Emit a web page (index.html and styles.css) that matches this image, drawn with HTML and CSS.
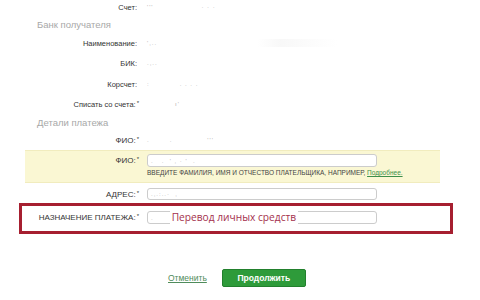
FILE: index.html
```html
<!DOCTYPE html>
<html lang="ru">
<head>
<meta charset="utf-8">
<link rel="stylesheet" href="styles.css">
</head>
<body>
<div class="page">
  <div class="row h14"><span class="lbl plain">Счет:</span><span class="val"><span class="blur">'''</span><span class="blur gap1">· · ·</span></span></div>
  <div class="heading h20">Банк получателя</div>
  <div class="row h18"><span class="lbl plain">Наименование:</span><span class="val"><span class="blur">',..</span><span class="smudge"></span></span></div>
  <div class="row h22"><span class="lbl plain">БИК:</span><span class="val"><span class="blur">.,..</span></span></div>
  <div class="row h20"><span class="lbl plain">Корсчет:</span><span class="val"><span class="blur">:</span><span class="blur gap2">. . . .</span></span></div>
  <div class="row h20"><span class="lbl">Списать со счета:<sup>*</sup></span><span class="val"><span class="blur gap3">ı'</span></span></div>
  <div class="heading h16">Детали платежа</div>
  <div class="row h20"><span class="lbl up">ФИО:<sup>*</sup></span><span class="val"><span class="blur">.</span><span class="blur gap4">.</span><span class="blur gap5">'''</span></span></div>

  <div class="hintbox">
    <div class="row">
      <span class="lbl up lbl-y">ФИО:<sup>*</sup></span>
      <div class="input"><span class="blur">.   .  ' , · '  .</span></div>
    </div>
    <div class="hint">ВВЕДИТЕ ФАМИЛИЯ, ИМЯ И ОТЧЕСТВО ПЛАТЕЛЬЩИКА, НАПРИМЕР, <a class="more" href="#">Подробнее.</a></div>
  </div>

  <div class="row addr">
    <span class="lbl up">АДРЕС:<sup>*</sup></span>
    <div class="input in12"><span class="blur">.,.:..·  ,</span></div>
  </div>

  <div class="redbox">
    <div class="row">
      <span class="lbl up lbl-r">НАЗНАЧЕНИЕ ПЛАТЕЖА:<sup>*</sup></span>
      <div class="input"><span class="blur">.</span><span class="purpose">Перевод личных средств</span></div>
    </div>
  </div>

  <div class="actions">
    <a class="cancel" href="#">Отменить</a>
    <button class="go" type="button">Продолжить</button>
  </div>
</div>
</body>
</html>
```

FILE: styles.css
```css
html, body {
  margin: 0;
  padding: 0;
  background: #ffffff;
}
body {
  width: 480px;
  height: 300px;
  overflow: hidden;
  font-family: "Liberation Sans", Arial, sans-serif;
  color: #333333;
}
.page {
  display: flex;
  flex-direction: column;
}
.row {
  display: flex;
  align-items: center;
}
.h14 { height: 14px; }
.h16 { height: 16px; }
.h18 { height: 18px; }
.h20 { height: 20px; }
.h22 { height: 22px; }

.lbl {
  width: 139px;
  flex: none;
  box-sizing: border-box;
  text-align: right;
  font-size: 7.5px;
  white-space: nowrap;
  color: #333333;
}
.lbl.plain { padding-right: 2px; }
.lbl.up { font-size: 8px; }
.lbl-y { width: 114px; }
.lbl-r { width: 117px; }
sup {
  font-size: 6px;
  vertical-align: 2px;
  line-height: 0;
  margin-left: 1px;
}
.val {
  margin-left: 8px;
  display: flex;
  align-items: center;
}
.heading {
  display: flex;
  align-items: center;
  padding-left: 37px;
  font-size: 9.5px;
  color: #a8a8a8;
}
.blur {
  color: #b0b0b0;
  font-size: 6px;
  letter-spacing: 1px;
  white-space: pre;
}
.gap1 { margin-left: 48px; }
.gap2 { margin-left: 30px; }
.gap3 { margin-left: 28px; }
.gap4 { margin-left: 20px; }
.gap5 { margin-left: 35px; }
.smudge {
  width: 80px;
  height: 8px;
  margin-left: 100px;
  background: linear-gradient(90deg, rgba(245,245,245,0), rgba(246,246,246,0.8) 30%, rgba(250,250,250,0.6) 70%, rgba(255,255,255,0));
}

.hintbox {
  margin-left: 25px;
  width: 415px;
  height: 33px;
  box-sizing: border-box;
  background: #faf7d3;
  border-top: 1px solid #f1ecbe;
  border-bottom: 1px solid #f1ecbe;
  padding-top: 3px;
}
.input {
  margin-left: 8px;
  width: 230px;
  height: 13px;
  box-sizing: border-box;
  border: 1px solid #cccccc;
  border-radius: 3px;
  background: #ffffff;
  display: flex;
  align-items: center;
  padding-left: 3px;
}
.in12 { height: 12px; }
.hint {
  margin-left: 122px;
  margin-top: 1px;
  height: 10px;
  line-height: 10px;
  font-size: 6.5px;
  color: #444444;
  white-space: nowrap;
}
.more {
  color: #3d8f4a;
  text-decoration: underline;
}
.addr {
  margin-top: 5px;
}
.redbox {
  margin-top: 3px;
  margin-left: 19px;
  width: 434px;
  height: 31px;
  box-sizing: border-box;
  border: 3px solid #a61f30;
  padding-top: 5px;
}
.purpose {
  margin-left: 16px;
  background: #ffffff;
  color: #a4304d;
  font-family: "Open Sans", "Liberation Sans", sans-serif;
  font-size: 10.2px;
  line-height: 15px;
  padding: 0 2px;
  white-space: nowrap;
}
.actions {
  margin-top: 35px;
  padding-left: 168px;
  display: flex;
  align-items: center;
  gap: 15px;
  height: 18px;
}
.cancel {
  font-size: 8.5px;
  color: #4f8c5c;
  text-decoration: underline;
}
.go {
  width: 84px;
  height: 18px;
  box-sizing: border-box;
  margin: 0;
  padding: 0;
  border: 1px solid #22802d;
  border-radius: 2px;
  background: #2e9b3a;
  color: #ffffff;
  font-family: "Liberation Sans", Arial, sans-serif;
  font-weight: bold;
  font-size: 8.5px;
  cursor: pointer;
}
```
